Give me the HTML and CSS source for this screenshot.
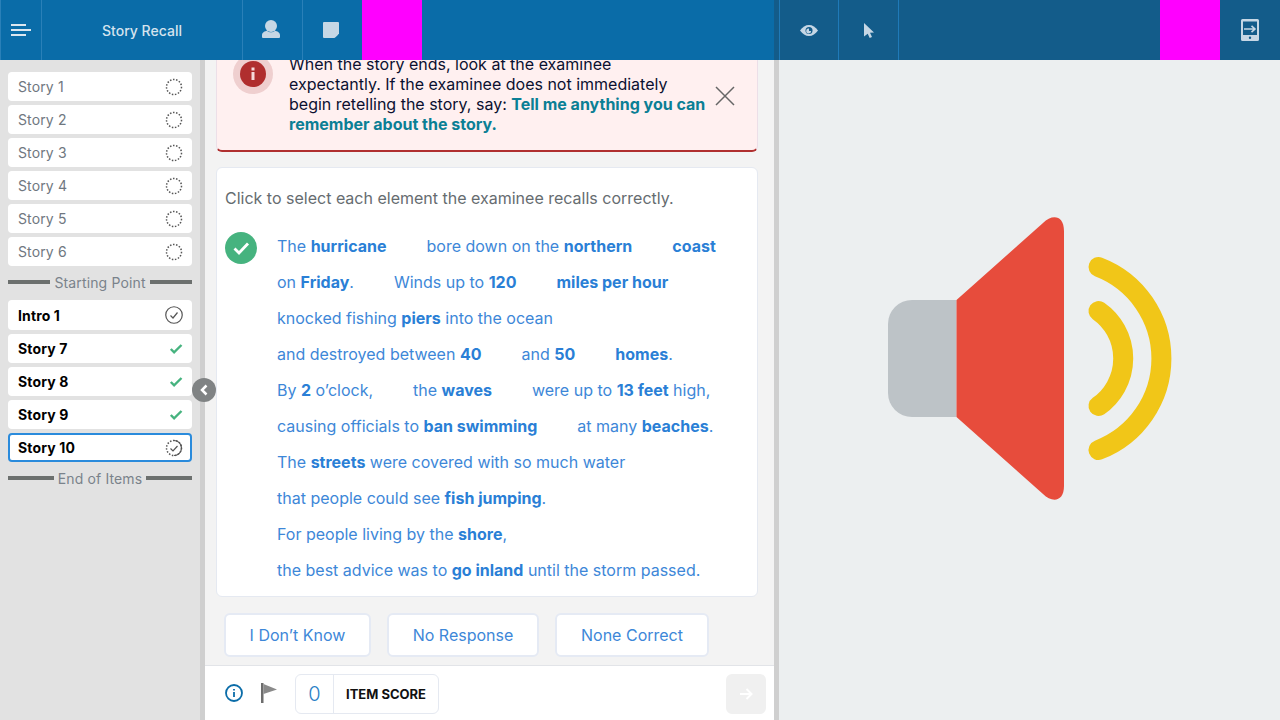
FILE: index.html
```html
<!DOCTYPE html>
<html lang="en">
<head>
<meta charset="utf-8">
<title>Story Recall</title>
<link rel="stylesheet" href="styles.css">
</head>
<body>
<div class="app">
  <section class="left-pane">
    <header class="bar bar-left">
      <div class="cell cell-menu">
        <svg width="20" height="12" viewBox="0 0 20 12"><path d="M0 1h15M0 6h20M0 11h15" class="line"/></svg>
      </div>
      <div class="cell cell-title">Story Recall</div>
      <div class="cell cell-icon">
        <svg class="person" width="18" height="18" viewBox="0 0 18 18"><circle cx="9" cy="6" r="6" class="fill"/><path d="M0 15c0-2.500 3-4 5-4.300 1.200 1 2.800 1.500 4 1.500s2.800-.5 4-1.500c2 .3 5 1.800 5 4.300v2a1 1 0 0 1-1 1H1a1 1 0 0 1-1-1z" class="fill"/></svg>
      </div>
      <div class="cell cell-icon">
        <svg width="16" height="16" viewBox="0 0 16 16"><path d="M1 0h14a1 1 0 0 1 1 1v10.500L11.500 16H1a1 1 0 0 1-1-1V1a1 1 0 0 1 1-1z" class="fill"/><path d="M12.200 15.500V12.200h3.300z" class="fill"/></svg>
      </div>
      <div class="cell magenta"></div>
    </header>
    <div class="work">
      <nav class="sidebar">
        <a class="item"><span>Story 1</span><svg class="st" width="18" height="18" viewBox="0 0 18 18"><circle cx="9" cy="9" r="7.500" class="dots"/></svg></a>
        <a class="item"><span>Story 2</span><svg class="st" width="18" height="18" viewBox="0 0 18 18"><circle cx="9" cy="9" r="7.500" class="dots"/></svg></a>
        <a class="item"><span>Story 3</span><svg class="st" width="18" height="18" viewBox="0 0 18 18"><circle cx="9" cy="9" r="7.500" class="dots"/></svg></a>
        <a class="item"><span>Story 4</span><svg class="st" width="18" height="18" viewBox="0 0 18 18"><circle cx="9" cy="9" r="7.500" class="dots"/></svg></a>
        <a class="item"><span>Story 5</span><svg class="st" width="18" height="18" viewBox="0 0 18 18"><circle cx="9" cy="9" r="7.500" class="dots"/></svg></a>
        <a class="item"><span>Story 6</span><svg class="st" width="18" height="18" viewBox="0 0 18 18"><circle cx="9" cy="9" r="7.500" class="dots"/></svg></a>
        <div class="sep"><i></i><span>Starting Point</span><i></i></div>
        <a class="item done tall"><span>Intro 1</span><svg class="st" width="18" height="18" viewBox="0 0 18 18"><circle cx="9" cy="9" r="8.250" class="ring"/><path d="M5.500 9.500l2.500 2.500 4.500-5.500" class="ring"/></svg></a>
        <a class="item done"><span>Story 7</span><svg class="st" width="18" height="18" viewBox="0 0 18 18"><path d="M5.800 9l3.300 3.300L16.500 5" class="tick"/></svg></a>
        <a class="item done"><span>Story 8</span><svg class="st" width="18" height="18" viewBox="0 0 18 18"><path d="M5.800 9l3.300 3.300L16.500 5" class="tick"/></svg></a>
        <a class="item done"><span>Story 9</span><svg class="st" width="18" height="18" viewBox="0 0 18 18"><path d="M5.800 9l3.300 3.300L16.500 5" class="tick"/></svg></a>
        <a class="item done current"><span>Story 10</span><svg class="st" width="18" height="18" viewBox="0 0 18 18"><circle cx="9" cy="9" r="7.500" class="dots"/><path d="M9 1.500a7.500 7.500 0 0 1 0 15" class="ring"/><path d="M5.500 9.500l2.500 2.500 4.500-5" class="ring"/></svg></a>
        <div class="sep"><i></i><span>End of Items</span><i></i></div>
      </nav>
      <button class="collapse" aria-label="Collapse">
        <svg width="10" height="12" viewBox="0 0 10 12"><path d="M7.500 1.500L3 6l4.500 4.500" class="chev"/></svg>
      </button>
      <main class="main">
        <div class="scroll">
          <div class="alert">
            <div class="alert-icon"><svg width="26" height="26" viewBox="0 0 26 26"><circle cx="13" cy="13" r="13" fill="#b02e2e"/><rect x="11.500" y="11" width="3" height="8" fill="#f6dada"/><rect x="11.500" y="6.500" width="3" height="3" fill="#f6dada"/></svg></div>
            <p class="alert-text">When the story ends, look at the examinee expectantly. If the examinee does not immediately begin retelling the story, say: <b>Tell me anything you can remember about the story.</b></p>
            <svg class="alert-close" width="20" height="20" viewBox="0 0 20 20"><path d="M1 1l18 18M19 1L1 19"/></svg>
          </div>
          <div class="card">
            <p class="prompt">Click to select each element the examinee recalls correctly.</p>
            <div class="story">
              <svg class="ok" width="32" height="32" viewBox="0 0 32 32"><circle cx="16" cy="16" r="16" fill="#46b37f"/><path d="M9.500 16.500l4.500 4.500 9-9.500" class="ok-tick"/></svg>
              <div class="lines">
                <div class="ln"><span>The <b>hurricane</b></span><span>bore down on the <b>northern</b></span><span><b>coast</b></span></div>
                <div class="ln"><span>on <b>Friday</b>.</span><span>Winds up to <b>120</b></span><span><b>miles per hour</b></span></div>
                <div class="ln"><span>knocked fishing <b>piers</b> into the ocean</span></div>
                <div class="ln"><span>and destroyed between <b>40</b></span><span>and <b>50</b></span><span><b>homes</b>.</span></div>
                <div class="ln"><span>By <b>2</b> o’clock,</span><span>the <b>waves</b></span><span>were up to <b>13 feet</b> high,</span></div>
                <div class="ln"><span>causing officials to <b>ban swimming</b></span><span>at many <b>beaches</b>.</span></div>
                <div class="ln"><span>The <b>streets</b> were covered with so much water</span></div>
                <div class="ln"><span>that people could see <b>fish jumping</b>.</span></div>
                <div class="ln"><span>For people living by the <b>shore</b>,</span></div>
                <div class="ln"><span>the best advice was to <b>go inland</b> until the storm passed.</span></div>
              </div>
            </div>
          </div>
          <div class="actions">
            <button class="act act-a">I Don’t Know</button>
            <button class="act act-b">No Response</button>
            <button class="act act-c">None Correct</button>
          </div>
        </div>
        <footer class="foot">
          <svg class="foot-info" width="18" height="18" viewBox="0 0 18 18"><circle cx="9" cy="9" r="8" class="info"/><path d="M9 8v5M9 5v1.600" class="info"/></svg>
          <svg class="foot-flag" width="16" height="20" viewBox="0 0 16 20"><rect x="0" y="0" width="2.500" height="20" fill="#6d6d6d"/><path d="M2.500 1L16 6.500 2.500 11z" fill="#8a8a8a"/></svg>
          <div class="score"><span class="score-n">0</span><span class="score-l">ITEM SCORE</span></div>
          <button class="next" aria-label="Next"><svg width="14" height="14" viewBox="0 0 14 14"><path d="M1 7h11M7.500 2L12.500 7l-5 5" class="next-a"/></svg></button>
        </footer>
      </main>
    </div>
  </section>
  <div class="divider"></div>
  <section class="right-pane">
    <header class="bar bar-right">
      <div class="cell cell-r cell-eye">
        <svg width="18" height="11" viewBox="0 0 18 11"><path d="M0 5.500C2.500 2 5.500 0 9 0s6.500 2 9 5.500C15.500 9 12.500 11 9 11S2.500 9 0 5.500z" class="fill"/><circle cx="9" cy="5.500" r="3.500" fill="#135c8a"/><path d="M9 3.500v2.500h2.200a2.500 2.500 0 1 1-2.200-2.500z" class="fill"/></svg>
      </div>
      <div class="cell cell-r">
        <svg width="10" height="15" viewBox="0 0 10 15"><path d="M0 0l10 9.500-4 .3 2 4.200-2.300 1-2-4.300L0 13.500z" class="fill"/></svg>
      </div>
      <div class="spacer"></div>
      <div class="cell magenta"></div>
      <div class="cell cell-end">
        <svg width="18" height="22" viewBox="0 0 18 22"><path fill-rule="evenodd" d="M1.500 0h15A1.500 1.500 0 0 1 18 1.500v19a1.500 1.500 0 0 1-1.500 1.500h-15A1.500 1.500 0 0 1 0 20.500v-19A1.500 1.500 0 0 1 1.500 0zM2 2.500V16h14V2.500zM9 17.500a1.200 1.200 0 1 0 0 2.400 1.200 1.200 0 0 0 0-2.400z" class="fill"/><path d="M3 10h11M10.500 6.800L14 10l-3.500 3.200" class="line-th"/></svg>
      </div>
    </header>
    <div class="stage">
      <svg width="284" height="284" viewBox="0 0 284 284">
        <path d="M68.500 83H24A24 24 0 0 0 0 107v69a24 24 0 0 0 24 24h44.500z" fill="#bdc3c7"/>
        <path d="M68.500 83L155 6C164-3 176-2 176 14V269C176 285 164 286 155 277L68.500 200z" fill="#e74c3c"/>
        <path d="M210.500 50A98 98 0 0 1 210.500 233M210.500 94A58 58 0 0 1 210.500 189" class="wave"/>
      </svg>
    </div>
  </section>
</div>
</body>
</html>
```
FILE: styles.css
```css
* { box-sizing: border-box; }
html, body { margin: 0; height: 100%; overflow: hidden; }
body { font-family: Inter, "Liberation Sans", sans-serif; font-size: 16px; background: #eceff0; }
p { margin: 0; }
button { font: inherit; }

.app { display: flex; width: 1280px; height: 720px; }
.left-pane { width: 774px; display: flex; flex-direction: column; }
.divider { width: 5px; background: linear-gradient(#135c8a 60px, #cfcfcf 60px); }
.right-pane { flex: 1; display: flex; flex-direction: column; }

.bar { height: 60px; display: flex; flex: none; }
.bar-left { background: #0a6ca8; }
.bar-right { background: #135c8a; }
.cell { display: flex; align-items: center; justify-content: center; height: 60px; flex: none; }
.cell-menu { width: 42px; border-left: 1px solid #2a80b8; border-right: 1px solid #2a80b8; }
.cell-title { width: 200px; color: #d5e3ee; font-size: 14px; font-weight: 500; }
.cell-icon { width: 60px; border-left: 1px solid #2a80b8; padding-right: 3px; }
.person { margin-bottom: 2px; }
.magenta { width: 60px; background: #ff00ff; }
.cell-r { width: 60px; border-left: 1px solid #1f7ab8; }
.cell-eye { width: 59px; }
.cell-r + .spacer { border-left: 1px solid #1f7ab8; }
.cell-end { width: 60px; }
.spacer { flex: 1; }

.fill { fill: #c6d7e5; }
.line { fill: none; stroke: #dbe7f0; stroke-width: 2; }
.line-th { fill: none; stroke: #c6d7e5; stroke-width: 1.600; }

.work { flex: 1; display: flex; min-height: 0; position: relative; }
.sidebar { width: 205px; flex: none; background: #e2e2e2; border-right: 5px solid #cfcfcf; padding: 12px 8px 0 8px; display: flex; flex-direction: column; gap: 4px; }
.item { height: 29px; flex: none; background: #fff; border-radius: 4px; display: flex; align-items: center; justify-content: space-between; padding: 0 9px 0 10px; font-size: 14px; letter-spacing: .14px; color: #6f7780; }
.item.done { color: #000; font-weight: 700; }
.item.tall { height: 30px; }
.item.current { border: 2px solid #2a8bdc; padding: 0 7px 0 8px; }
.st { flex: none; }
.dots { fill: none; stroke: #555; stroke-width: 1.500; stroke-dasharray: 1.500 1.600; }
.ring { fill: none; stroke: #555; stroke-width: 1.200; }
.tick { fill: none; stroke: #46b37f; stroke-width: 2.400; }
.sep { display: flex; align-items: center; gap: 4px; height: 20px; margin: 2px 0 4px; color: #7a828b; font-size: 14px; letter-spacing: .14px; }
.sep i { flex: 1; height: 4px; background: #6c706e; }

.collapse { position: absolute; left: 192px; top: 318px; width: 24px; height: 24px; border: 0; border-radius: 50%; background: #808384; padding: 0; display: flex; align-items: center; justify-content: center; }
.chev { fill: none; stroke: #fff; stroke-width: 2.500; }

.main { flex: 1; min-width: 0; display: flex; flex-direction: column; background: #f3f3f3; }
.scroll { flex: 1; min-height: 0; overflow: hidden; padding: 0 16px 0 11px; }

.alert { height: 92px; background: #fff0f0; border: 1px solid #ecdfe8; border-bottom: 2px solid #b03030; border-radius: 0 0 6px 6px; border-top: 0; display: flex; position: relative; padding-left: 72px; }
.alert-icon { position: absolute; left: 16px; top: -6px; width: 40px; height: 40px; border-radius: 50%; background: #efcfcf; display: flex; align-items: center; justify-content: center; }
.alert-text { width: 417px; margin-top: -6px; line-height: 20px; color: #0b1030; font-size: 16px; }
.alert-text b { color: #0b7f95; font-weight: 700; }
.alert-close { position: absolute; right: 22px; top: 26px; fill: none; stroke: #666; stroke-width: 1.500; }

.card { margin-top: 15px; height: 430px; background: #fff; border: 1px solid #e5e9f1; border-radius: 6px; padding: 20px 8px 0 8px; }
.prompt { color: #666c70; line-height: 20px; }
.story { display: flex; margin-top: 19px; }
.ok { flex: none; margin-top: 5px; margin-right: 20px; }
.ok-tick { fill: none; stroke: #fff; stroke-width: 2.800; }
.lines { flex: 1; padding-top: 1px; }
.ln { height: 36px; display: flex; gap: 40px; color: #3d87d8; line-height: 36px; white-space: nowrap; }
.ln b { color: #2a7fd6; font-weight: 700; }

.actions { display: flex; gap: 16px; margin-top: 16px; padding-left: 8px; }
.act { height: 44px; background: #fff; border: 2px solid #e5eaf4; border-radius: 6px; color: #3d87d8; }
.act-a { width: 147px; }
.act-b { width: 152px; }
.act-c { width: 154px; }

.foot { height: 55px; flex: none; background: #fff; border-top: 1px solid #e2e4e8; display: flex; align-items: center; padding-left: 20px; }
.info { fill: none; stroke: #0a6ca8; stroke-width: 1.800; }
.foot-flag { margin-left: 18px; }
.score { margin: 2px 0 0 18px; height: 40px; width: 144px; border: 1px solid #e5e9f1; border-radius: 6px; display: flex; align-items: center; }
.score-n { width: 38px; height: 100%; border-right: 1px solid #e5e9f1; display: flex; align-items: center; justify-content: center; color: #2a7fc6; font-size: 20px; font-weight: 300; }
.score-l { flex: 1; text-align: center; font-size: 13px; font-weight: 700; color: #111; }
.next { margin: 2px 8px 0 auto; width: 40px; height: 40px; border: 0; border-radius: 6px; background: #f0f0f0; display: flex; align-items: center; justify-content: center; padding: 0; }
.next-a { fill: none; stroke: #fff; stroke-width: 2; }

.stage { flex: 1; display: flex; align-items: center; justify-content: center; padding-bottom: 62px; background: #eceff0; }
.wave { fill: none; stroke: #f1c618; stroke-width: 20; stroke-linecap: round; }
```
